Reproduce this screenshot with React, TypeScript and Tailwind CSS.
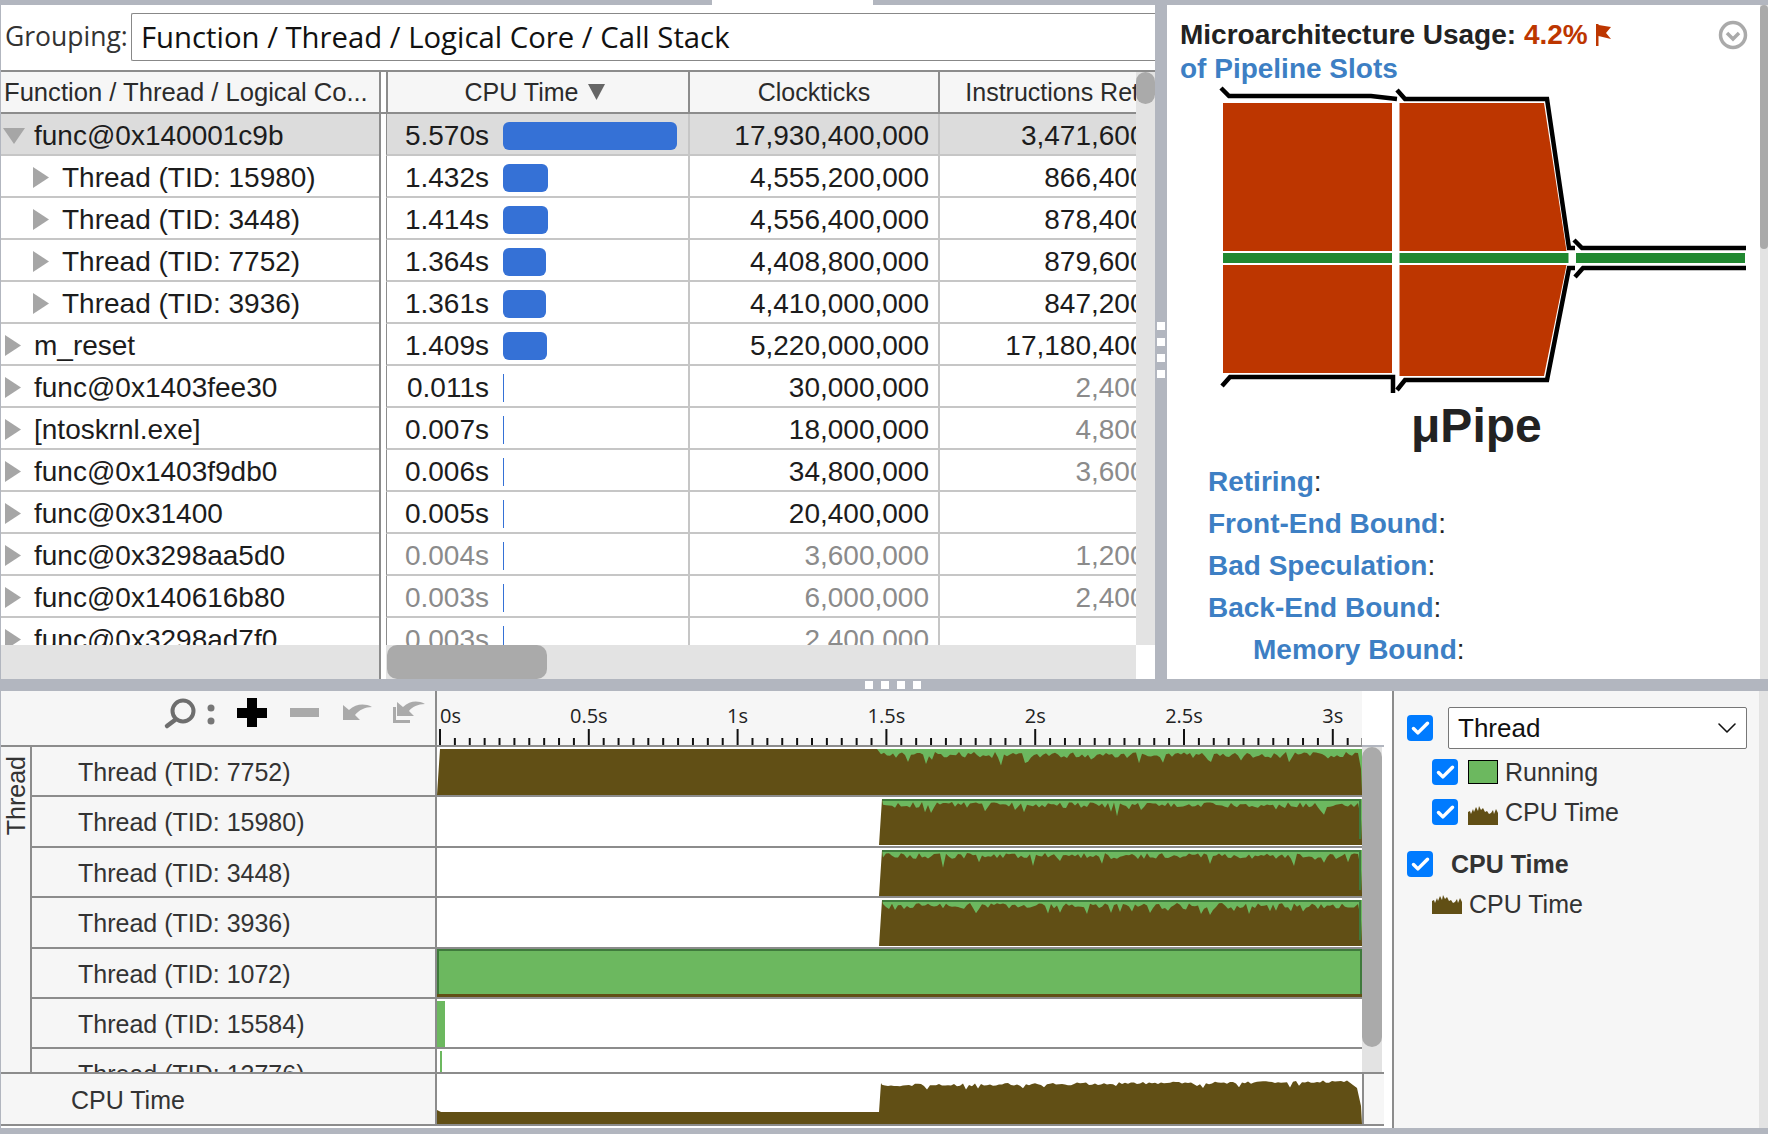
import { Check, ChevronDown } from "lucide-react";

const ARIAL = "font-['Liberation_Sans',Arial,sans-serif]";
const SEGOE = "font-['Open_Sans','Noto_Sans',sans-serif]";

type Row = {
  name: string;
  child?: boolean;
  open?: boolean;
  time: string;
  bar: number;
  clock: string;
  inst: string;
  dimTime?: boolean;
  dimClock?: boolean;
  dimInst?: boolean;
};

const rows: Row[] = [
  { name: "func@0x140001c9b", open: true, time: "5.570s", bar: 174, clock: "17,930,400,000", inst: "3,471,600,000" },
  { name: "Thread (TID: 15980)", child: true, time: "1.432s", bar: 45, clock: "4,555,200,000", inst: "866,400,000" },
  { name: "Thread (TID: 3448)", child: true, time: "1.414s", bar: 45, clock: "4,556,400,000", inst: "878,400,000" },
  { name: "Thread (TID: 7752)", child: true, time: "1.364s", bar: 43, clock: "4,408,800,000", inst: "879,600,000" },
  { name: "Thread (TID: 3936)", child: true, time: "1.361s", bar: 43, clock: "4,410,000,000", inst: "847,200,000" },
  { name: "m_reset", time: "1.409s", bar: 44, clock: "5,220,000,000", inst: "17,180,400,000" },
  { name: "func@0x1403fee30", time: "0.011s", bar: 1, clock: "30,000,000", inst: "2,400,000", dimInst: true },
  { name: "[ntoskrnl.exe]", time: "0.007s", bar: 1, clock: "18,000,000", inst: "4,800,000", dimInst: true },
  { name: "func@0x1403f9db0", time: "0.006s", bar: 1, clock: "34,800,000", inst: "3,600,000", dimInst: true },
  { name: "func@0x31400", time: "0.005s", bar: 1, clock: "20,400,000", inst: "" },
  { name: "func@0x3298aa5d0", time: "0.004s", bar: 1, clock: "3,600,000", inst: "1,200,000", dimTime: true, dimClock: true, dimInst: true },
  { name: "func@0x140616b80", time: "0.003s", bar: 1, clock: "6,000,000", inst: "2,400,000", dimTime: true, dimClock: true, dimInst: true },
  { name: "func@0x3298ad7f0", time: "0.003s", bar: 1, clock: "2,400,000", inst: "", dimTime: true, dimClock: true, dimInst: true },
];

const BROWN = "#614f15";
const GREEN = "#6cb85f";

// small seeded generator so the charts stay the same between runs
function noise(seed: number) {
  let s = seed;
  return () => {
    s = (s * 1664525 + 1013904223) % 4294967296;
    return s / 4294967296;
  };
}

function topEdge(seed: number, from: number, to: number, base: number, spike: number) {
  const r = noise(seed);
  const pts: string[] = [];
  for (let x = from; x <= to; x += 3) {
    const v = r();
    let d = 3 + base * r();
    if (v > 0.88) d += spike * r();
    pts.push(`${x},${(2 + d).toFixed(1)}`);
  }
  return pts.join(" ");
}

function ThreadChart({ seed, start }: { seed: number; start: number }) {
  const h = 48;
  const left = start + 3;
  const flat = start === 0;
  return (
    <svg width="925" height={h} className="block">
      <rect x={left} y="2" width={925 - left} height={h - 2} fill={GREEN} />
      {!flat && <line x1={left} y1="3" x2="923" y2="3" stroke="#3f7a3c" strokeWidth="2" />}
      <polygon
        points={`${start},${h} ${left},2 ${flat ? "440,2 " : ""}${topEdge(seed + 1, Math.max(left + 1, 444), 918, 6, 10)} 921,6 924,22 925,${h - 3} 925,${h}`}
        fill={BROWN}
      />
      {!flat && <rect x="922" y="2" width="2" height={h - 8} fill="#3f7a3c" />}
    </svg>
  );
}

function FullGreenChart() {
  return (
    <svg width="925" height="48" className="block">
      <rect x="1" y="1" width="923" height="46" fill={GREEN} stroke="#3f7a3c" strokeWidth="2" />
      <rect x="0" y="45" width="925" height="3" fill={BROWN} />
    </svg>
  );
}

function CpuChart() {
  const r = noise(77);
  const pts: string[] = [];
  for (let x = 445; x <= 915; x += 3) {
    const rise = ((x - 445) / 470) * 4;
    const y = 10 - rise + r() * 3 + (r() > 0.94 ? 4 : 0);
    pts.push(`${x},${y.toFixed(1)}`);
  }
  return (
    <svg width="925" height="50" className="block">
      <polygon
        points={`0,50 0,36 4,38 442,38 444,9 ${pts.join(" ")} 920,14 924,32 925,50`}
        fill={BROWN}
      />
    </svg>
  );
}

function MiniChart() {
  return (
    <svg width="30" height="19" viewBox="0 0 30 19" className="block">
      <polygon
        points="0,19 0,6 2,5 3,8 5,3 6,6 8,1 10,5 11,0 13,4 15,2 17,6 19,5 21,8 23,7 25,4 26,8 28,3 30,7 30,19"
        fill={BROWN}
      />
    </svg>
  );
}

function Arrow({ open }: { open?: boolean }) {
  if (open) {
    return (
      <svg width="22" height="16" className="block shrink-0">
        <polygon points="0,0 22,0 11,16" fill="#a6a6a6" />
      </svg>
    );
  }
  return (
    <svg width="16" height="21" className="block shrink-0">
      <polygon points="0,0 16,10.5 0,21" fill="#a6a6a6" />
    </svg>
  );
}

function Box() {
  return (
    <span className="flex h-[26px] w-[26px] shrink-0 items-center justify-center rounded-[4px] bg-[#007bff]">
      <Check size={21} strokeWidth={4} className="text-white" />
    </span>
  );
}

function TableRow({ r }: { r: Row }) {
  const gray = "text-[#8b8b8b]";
  return (
    <div className={`flex h-[42px] shrink-0 text-[28px] leading-[40px] ${r.open ? "bg-[#dcdcdc]" : "bg-white"} text-[#1c1c1c]`}>
      <div className={`flex w-[378px] shrink-0 items-center border-b-2 border-[#c6c6c6] pt-[3px] ${r.open ? "pl-[2px]" : r.child ? "pl-[32px]" : "pl-[4px]"}`}>
        <Arrow open={r.open} />
        <span className={`whitespace-nowrap ${r.open ? "ml-[9px]" : r.child ? "ml-[13px]" : "ml-[13px]"}`}>{r.name}</span>
      </div>
      <div className="w-[2px] shrink-0 bg-[#8c8c8c]" />
      <div className="w-[5px] shrink-0 bg-white" />
      <div className="flex w-[304px] shrink-0 items-center border-b-2 border-l border-r-2 border-b-[#c6c6c6] border-l-[#8c8c8c] border-r-[#c6c6c6] pt-[3px]">
        <span className={`w-[102px] shrink-0 text-right ${r.dimTime ? gray : ""}`}>{r.time}</span>
        <span
          className={`ml-[14px] h-[28px] bg-[#3571d6] ${r.bar > 1 ? "rounded-[6px]" : ""}`}
          style={{ width: r.bar }}
        />
      </div>
      <div className={`w-[250px] shrink-0 border-b-2 border-r-2 border-[#c6c6c6] pr-[9px] text-right leading-[43px] ${r.dimClock ? gray : ""}`}>
        {r.clock}
      </div>
      <div className={`w-[260px] shrink-0 border-b-2 border-[#c6c6c6] text-right leading-[43px] ${r.dimInst ? gray : ""}`}>{r.inst}</div>
    </div>
  );
}

function TablePane() {
  return (
    <div className={`flex min-h-0 flex-1 border-t-2 border-[#8c8c8c] ${ARIAL}`}>
      <div className="flex w-[1135px] shrink-0 flex-col overflow-hidden">
        <div className="flex h-[42px] shrink-0 border-b-2 border-[#8c8c8c] bg-[#f6f6f6] text-[25px] leading-[40px] text-[#2b2b2b]">
          <div className="w-[378px] shrink-0 whitespace-nowrap pl-[3px] text-[25.6px]">Function / Thread / Logical Co...</div>
          <div className="w-[2px] shrink-0 bg-[#8c8c8c]" />
          <div className="w-[5px] shrink-0 bg-white" />
          <div className="flex w-[304px] shrink-0 items-center justify-center gap-[10px] border-x-2 border-x-[#8c8c8c] pl-[20px] pr-[26px]">
            <span>CPU Time</span>
            <svg width="17" height="16" className="block">
              <polygon points="0,0 17,0 8.5,16" fill="#666" />
            </svg>
          </div>
          <div className="w-[250px] shrink-0 border-r-2 border-[#8c8c8c] text-center">Clockticks</div>
          <div className="w-[266px] shrink-0 whitespace-nowrap text-center">Instructions Retired</div>
        </div>
        <div className="flex min-h-0 flex-1 flex-col overflow-hidden">
          {rows.map((r) => (
            <TableRow key={r.name} r={r} />
          ))}
        </div>
        <div className="flex h-[34px] shrink-0 bg-[#e3e3e3]">
          <div className="w-[378px] shrink-0" />
          <div className="w-[2px] shrink-0 bg-[#8c8c8c]" />
          <div className="w-[5px] shrink-0 bg-white" />
          <div className="ml-px h-full w-[160px] rounded-[10px] bg-[#aaaaaa]" />
        </div>
      </div>
      <div className="flex w-[19px] shrink-0 flex-col bg-white">
        <div className="h-[573px] bg-[#e3e3e3]">
          <div className="h-[32px] rounded-t-[10px] rounded-b-[10px] bg-[#aaaaaa]" />
        </div>
      </div>
    </div>
  );
}

function Diagram() {
  const outline = { fill: "none", stroke: "#000", strokeWidth: 4.5 };
  // drawn in page pixels, the group shift puts it back in the svg box
  return (
    <svg width="593" height="320" className="block shrink-0">
      <g transform="translate(-1167 -84)">
        <polygon points="1223,103 1392,103 1392,251 1223,251" fill="#bd3600" />
        <polygon points="1223,265 1392,265 1392,373 1223,373" fill="#bd3600" />
        <polygon points="1399.5,103 1544,103 1566.5,251 1399.5,251" fill="#bd3600" />
        <polygon points="1399.5,265 1566.5,265 1544,376 1399.5,376" fill="#bd3600" />
        <rect x="1223" y="253" width="169" height="10" fill="#208830" />
        <rect x="1399.5" y="253" width="169" height="10" fill="#208830" />
        <rect x="1576" y="253" width="169" height="10" fill="#208830" />
        <polyline points="1221,88 1229,96 1371,96 1397,99" {...outline} />
        <polyline points="1397,90 1405,99 1547,99 1569,248 1575,248" {...outline} />
        <polyline points="1574,240 1582,248 1746,248" {...outline} />
        <polyline points="1222,386 1230,377 1393,377 1393,393" {...outline} />
        <polyline points="1397,390 1405,380 1547,380 1569,268 1575,268" {...outline} />
        <polyline points="1575,277 1583,268 1746,268" {...outline} />
      </g>
    </svg>
  );
}

function SummaryPane() {
  const link = "font-bold text-[#3d7fc4]";
  return (
    <div className={`relative flex w-[593px] shrink-0 flex-col overflow-hidden bg-white ${ARIAL} text-[#222]`}>
      <div className="pl-[13px] pt-[13px] text-[28px] font-bold leading-[34px]">
        <div className="flex items-center whitespace-nowrap">
          Microarchitecture Usage:&nbsp;<span className="text-[#bd3600]">4.2%</span>
          <svg width="16" height="22" className="ml-[8px] block">
            <polygon points="0,0 2.5,0 2.5,1 15,3 10,9 15,15 2.5,12 2.5,22 0,22" fill="#bd3600" />
          </svg>
        </div>
        <div className="text-[#3d7fc4]">of Pipeline Slots</div>
      </div>
      <svg width="30" height="30" className="absolute right-[12px] top-[15px]">
        <circle cx="15" cy="15" r="12.5" fill="none" stroke="#aaaaaa" strokeWidth="3.5" />
        <polyline points="9,13 15,19 21,13" fill="none" stroke="#aaaaaa" strokeWidth="3.5" />
      </svg>
      <div className="-mt-[2px]">
        <Diagram />
      </div>
      <div className="-mt-[4px] ml-[244px] h-[55px] text-[48px] font-bold leading-[52px]">μPipe</div>
      <div className="pl-[41px] pt-[6px] text-[28px] leading-[42px]">
        <div><span className={link}>Retiring</span>:</div>
        <div><span className={link}>Front-End Bound</span>:</div>
        <div><span className={link}>Bad Speculation</span>:</div>
        <div><span className={link}>Back-End Bound</span>:</div>
        <div className="pl-[45px]"><span className={link}>Memory Bound</span>:</div>
      </div>
    </div>
  );
}

function ZoomTools() {
  return (
    <svg width="280" height="50" className="block">
      <g transform="translate(-161 -695)">
        <circle cx="183" cy="715" r="10.5" fill="none" stroke="#6e6e6e" strokeWidth="4" />
        <line x1="175" y1="724" x2="167" y2="730" stroke="#6e6e6e" strokeWidth="4.5" strokeLinecap="round" />
        <circle cx="211" cy="712" r="3.5" fill="#777" />
        <circle cx="211" cy="725" r="3.5" fill="#777" />
        <rect x="247" y="702" width="10" height="29" fill="#000" />
        <rect x="237" y="712" width="30" height="10" fill="#000" />
        <rect x="290" y="712" width="29" height="9" fill="#aaaaaa" />
        <path d="M343,724 L343,709 L349,714 C356,708 364,707 372,711 C365,711 359,714 355,719 L360,724 Z" fill="#aaaaaa" />
        <path d="M397,720 L397,706 L403,711 C410,705 417,704 425,708 C418,708 412,711 409,715 L414,720 Z" fill="#aaaaaa" />
        <path d="M393,727 L393,711 L396,711 L396,724 L410,724 L410,727 Z" fill="#aaaaaa" />
      </g>
    </svg>
  );
}

function Ruler() {
  const labels = ["0s", "0.5s", "1s", "1.5s", "2s", "2.5s", "3s"];
  const ticks = Array.from({ length: 63 }, (_, i) => i);
  return (
    <div className={`relative h-[54px] w-[925px] shrink-0 overflow-hidden bg-[#f6f6f6] ${SEGOE} text-[20px] text-[#222]`}>
      {labels.map((l, i) => (
        <span
          key={l}
          className="absolute top-[12px] leading-[26px]"
          style={i === 0 ? { left: 3 } : { left: 3 + i * 148.8, transform: "translateX(-50%)" }}
        >
          {l}
        </span>
      ))}
      <svg width="925" height="54" className="block">
        {ticks.map((i) => {
          const x = 3 + i * 14.88;
          const major = i % 10 === 0;
          return <line key={i} x1={x} x2={x} y1={major ? 38 : 47} y2="54" stroke="#111" strokeWidth="2" />;
        })}
      </svg>
    </div>
  );
}

function ChartRow({ label, children }: { label: string; children: React.ReactNode }) {
  return (
    <div className="flex h-[50.4px] shrink-0 border-b-2 border-[#8c8c8c]">
      <div className="flex w-[403px] shrink-0 items-center whitespace-nowrap bg-[#f6f6f6] pl-[46px] pt-[3px] text-[25px] text-[#333]">
        {label}
      </div>
      <div className="w-[2px] shrink-0 bg-[#8c8c8c]" />
      <div className="w-[925px] shrink-0 overflow-hidden bg-white">{children}</div>
    </div>
  );
}

function Timeline() {
  return (
    <div className={`flex w-[1383px] shrink-0 flex-col ${ARIAL}`}>
      <div className="flex h-[54px] shrink-0">
        <div className="w-[160px] shrink-0 bg-[#f6f6f6]" />
        <div className="w-[274px] shrink-0 overflow-hidden bg-[#f6f6f6]">
          <ZoomTools />
        </div>
        <div className="w-[2px] shrink-0 bg-[#8c8c8c]" />
        <Ruler />
        <div className="w-[22px] shrink-0 bg-white" />
      </div>
      <div className="h-[2px] w-[1361px] shrink-0 bg-[#8c8c8c]" />
      <div className="flex h-[325px] shrink-0 overflow-hidden">
        <div className="flex w-[31px] shrink-0 justify-center border-r-2 border-[#8c8c8c] bg-[#f6f6f6]">
          <span className="mt-[9px] h-fit text-[25px] leading-[30px] text-[#333] [writing-mode:vertical-rl] rotate-180">Thread</span>
        </div>
        <div className="flex w-[1330px] shrink-0 flex-col overflow-hidden">
          <ChartRow label="Thread (TID: 7752)"><ThreadChart seed={11} start={0} /></ChartRow>
          <ChartRow label="Thread (TID: 15980)"><ThreadChart seed={23} start={442} /></ChartRow>
          <ChartRow label="Thread (TID: 3448)"><ThreadChart seed={37} start={442} /></ChartRow>
          <ChartRow label="Thread (TID: 3936)"><ThreadChart seed={53} start={442} /></ChartRow>
          <ChartRow label="Thread (TID: 1072)"><FullGreenChart /></ChartRow>
          <ChartRow label="Thread (TID: 15584)">
            <div className="mt-[2px] h-[46px] w-[8px] bg-[#6cb85f]" />
          </ChartRow>
          <ChartRow label="Thread (TID: 13776)">
            <div className="ml-[3px] mt-[2px] h-[46px] w-[2px] bg-[#6cb85f]" />
          </ChartRow>
        </div>
        <div className="h-full w-[20px] shrink-0 bg-[#e3e3e3]">
          <div className="h-[300px] rounded-[10px] bg-[#aaaaaa]" />
        </div>
        <div className="flex-1 bg-white" />
      </div>
      <div className="h-[2px] shrink-0 bg-[#8c8c8c]" />
      <div className="flex h-[50px] shrink-0">
        <div className="flex w-[434px] shrink-0 items-center bg-[#f6f6f6] pl-[70px] pt-[3px] text-[25px] text-[#333]">CPU Time</div>
        <div className="w-[2px] shrink-0 bg-[#8c8c8c]" />
        <div className="w-[925px] shrink-0 bg-white"><CpuChart /></div>
        <div className="flex-1 border-l-2 border-[#8c8c8c] bg-[#f6f6f6]" />
      </div>
      <div className="h-[2px] shrink-0 bg-[#8c8c8c]" />
      <div className="flex-1 bg-white" />
    </div>
  );
}

function Legend() {
  return (
    <div className={`flex w-[367px] shrink-0 flex-col border-l-2 border-[#8c8c8c] bg-[#f6f6f6] pl-[13px] pt-[16px] text-[25px] leading-[30px] text-[#333] ${ARIAL}`}>
      <div className="flex items-center">
        <Box />
        <div className="ml-[15px] flex h-[42px] w-[299px] items-center justify-between rounded-[2px] border border-[#777] bg-white pl-[9px] pr-[3px] text-[26px] text-[#111]">
          Thread
          <ChevronDown size={32} strokeWidth={1.2} className="text-[#111]" />
        </div>
      </div>
      <div className="ml-[25px] mt-[10px] flex h-[26px] items-center">
        <Box />
        <span className="ml-[10px] h-[24px] w-[30px] border border-black bg-[#6cb85f]" />
        <span className="ml-[7px]">Running</span>
      </div>
      <div className="ml-[25px] mt-[14px] flex h-[26px] items-center">
        <Box />
        <span className="ml-[10px] mt-[6px]"><MiniChart /></span>
        <span className="ml-[7px]">CPU Time</span>
      </div>
      <div className="mt-[26px] flex h-[26px] items-center">
        <Box />
        <span className="ml-[18px] font-bold">CPU Time</span>
      </div>
      <div className="ml-[25px] mt-[12px] flex h-[30px] items-center">
        <MiniChart />
        <span className="ml-[7px]">CPU Time</span>
      </div>
    </div>
  );
}

export default function App() {
  return (
    <div className="flex h-[1134px] w-[1768px] flex-col overflow-hidden bg-[#b2b6bf]">
      <div className="flex h-[5px] shrink-0">
        <div className="ml-[712px] w-[161px] bg-white" />
      </div>

      <div className="flex h-[674px] shrink-0 pl-px">
        <div className="flex w-[1154px] shrink-0 flex-col bg-white">
          <div className={`flex h-[65px] shrink-0 items-start pt-[8px] ${SEGOE}`}>
            <span className="w-[130px] shrink-0 pl-[4px] text-[26.5px] leading-[47px] text-[#333]">Grouping:</span>
            <div className="h-[48px] flex-1 overflow-hidden whitespace-nowrap rounded-l-[2px] border-y border-l border-[#888] pl-[9px] text-[29.3px] leading-[47px] text-[#111]">
              Function / Thread / Logical Core / Call Stack
            </div>
          </div>
          <TablePane />
        </div>
        <div className="flex w-[12px] shrink-0 flex-col items-center gap-[8px] pt-[317px]">
          <span className="h-[8px] w-[8px] bg-white" />
          <span className="h-[8px] w-[8px] bg-white" />
          <span className="h-[8px] w-[8px] bg-white" />
          <span className="h-[8px] w-[8px] bg-white" />
        </div>
        <SummaryPane />
        <div className="flex-1 bg-[#e3e3e3]">
          <div className="h-[244px] rounded-[6px] bg-[#aaaaaa]" />
        </div>
      </div>

      <div className="flex h-[12px] shrink-0 items-center gap-[8px] pl-[865px]">
        <span className="h-[8px] w-[8px] bg-white" />
        <span className="h-[8px] w-[8px] bg-white" />
        <span className="h-[8px] w-[8px] bg-white" />
        <span className="h-[8px] w-[8px] bg-white" />
      </div>

      <div className="flex h-[437px] shrink-0 pl-px">
        <Timeline />
        <div className="w-[8px] shrink-0 bg-white" />
        <Legend />
        <div className="flex-1 bg-[#e3e3e3]" />
      </div>
    </div>
  );
}
